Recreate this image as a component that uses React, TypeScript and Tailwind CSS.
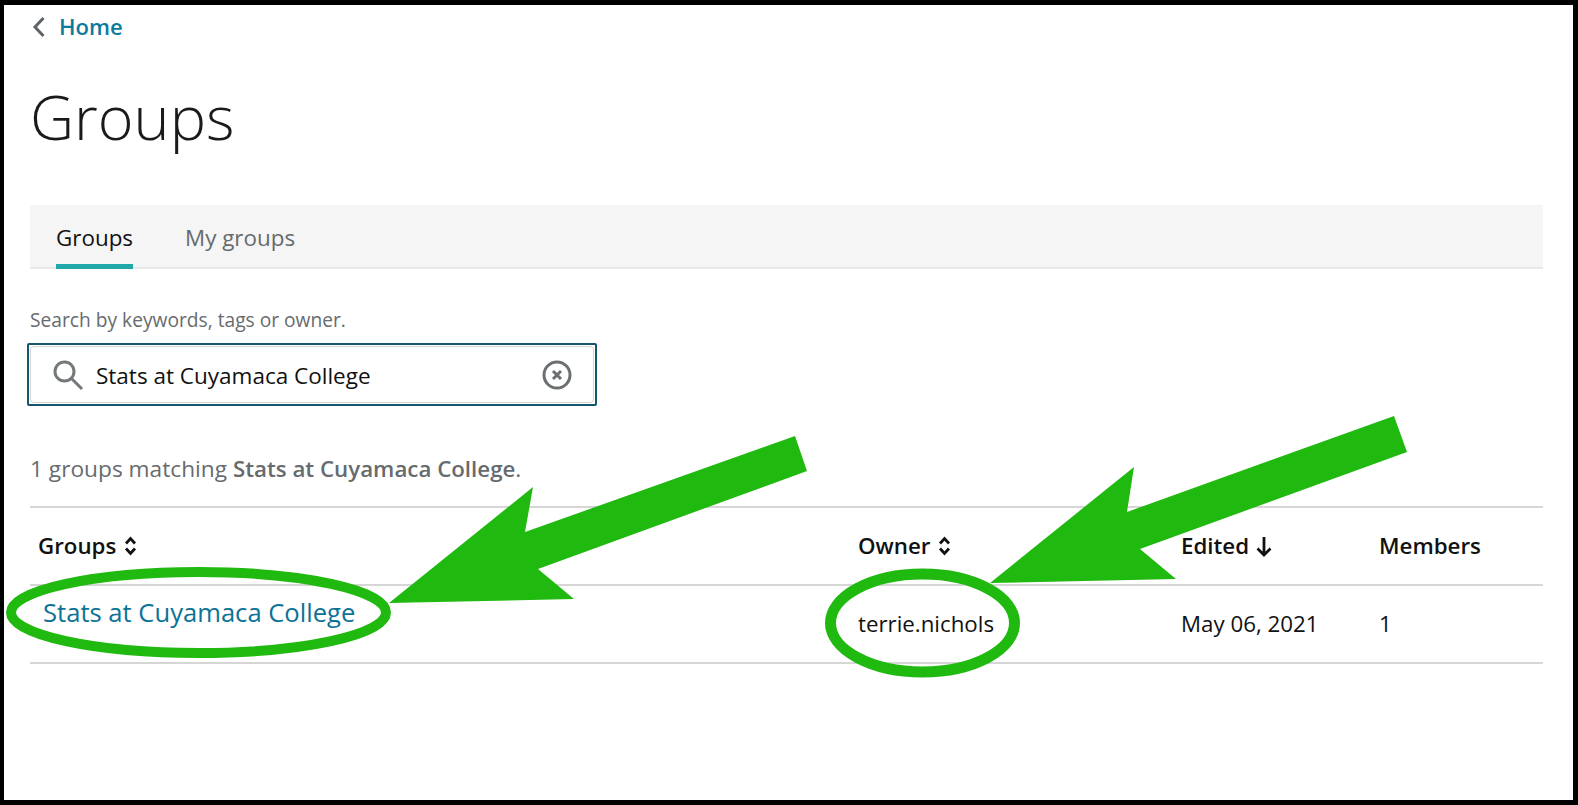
import React from "react";

function SortIcon() {
  return (
    <svg width="15" height="22" viewBox="0 0 15 22" fill="none" stroke="#111" strokeWidth="2.8" className="ml-[7px]">
      <path d="M3 8.5 L7.5 3.5 L12 8.5" />
      <path d="M3 13.5 L7.5 18.5 L12 13.5" />
    </svg>
  );
}

function Arrows() {
  return (
    <svg width="1578" height="805" viewBox="0 0 1578 805" className="pointer-events-none absolute top-0 left-0">
      <polygon points="795,436 807,471 538,569 574,599 389,603 533,487 525,532" fill="#20b90f" />
      <polygon points="1394,416 1407,452 1140,549 1176,579 990,583 1134,467 1127,512" fill="#20b90f" />
      <ellipse cx="198.5" cy="612.5" rx="187.5" ry="40.5" fill="none" stroke="#20b90f" strokeWidth="10" />
      <ellipse cx="922.5" cy="623" rx="92" ry="49" fill="none" stroke="#20b90f" strokeWidth="11" />
    </svg>
  );
}

export default function App() {
  return (
    <div className="relative h-[805px] w-[1578px] overflow-hidden border-y-[5px] border-r-[5px] border-l-[4px] border-black bg-white font-['Open_Sans',sans-serif]">
      <div className="flex h-[43px] items-center pl-[28px]">
        <svg width="14" height="22" viewBox="0 0 14 22" fill="none" stroke="#5c6468" strokeWidth="3">
          <path d="M11.5 2 L3 11 L11.5 20" />
        </svg>
        <a className="ml-[13px] text-[22px] font-semibold text-[#0c7a9c]">Home</a>
      </div>

      <h1 className="mt-[27px] pl-[26px] text-[61px] leading-[84px] font-light text-[#1a1a1a]">Groups</h1>

      <div className="mx-[26px] mt-[46px] flex h-[64px] w-[1513px] gap-[52px] border-b-2 border-[#e8e8e8] bg-[#f5f5f5] pl-[26px]">
        <div className="flex h-[64px] items-center border-b-[5px] border-[#20a8a8] pt-[6px] text-[22.4px] text-[#111]">Groups</div>
        <div className="flex h-[64px] items-center pt-[1px] text-[22.4px] text-[#666b6e]">My groups</div>
      </div>

      <p className="mt-[37px] pl-[26px] text-[19.2px] leading-[28px] text-[#666b6e]">Search by keywords, tags or owner.</p>

      <div className="mt-[9px] ml-[23px] w-[570px] rounded-[2px] border-2 border-[#15566f] p-[1px]">
        <div className="flex h-[57px] items-center rounded-[4px] border border-[#d4d4d4] pr-[21px] pl-[20px]">
          <svg width="34" height="34" viewBox="0 0 34 34" fill="none" stroke="#73787a" strokeWidth="3">
            <circle cx="13.5" cy="13.5" r="9.5" />
            <path d="M20.5 20.5 L31 31" />
          </svg>
          <span className="ml-[11px] flex-1 pt-[2px] text-[22.5px] text-[#111]">Stats at Cuyamaca College</span>
          <svg width="30" height="30" viewBox="0 0 30 30" fill="none" stroke="#6a6f71" strokeWidth="3">
            <circle cx="15" cy="15" r="13" />
            <path d="M11 11 L19 19 M19 11 L11 19" />
          </svg>
        </div>
      </div>

      <p className="mt-[48px] pl-[26px] text-[22.7px] leading-[30px] text-[#666b6e]">
        1 groups matching <strong className="text-[22.3px] font-semibold">Stats at Cuyamaca College</strong>.
      </p>

      <div className="mx-[26px] mt-[22px] w-[1513px] text-[22.3px] text-[#111]">
        <div className="grid h-[80px] grid-cols-[820px_323px_198px_1fr] items-center border-y-2 border-[#d6d6d6] pl-[8px] font-semibold">
          <div className="flex items-center">Groups<SortIcon /></div>
          <div className="flex items-center">Owner<SortIcon /></div>
          <div className="flex items-center">
            Edited
            <svg width="18" height="24" viewBox="0 0 18 24" fill="none" stroke="#111" strokeWidth="2.8" className="ml-[6px]">
              <path d="M9 3 V21 M2.5 14.5 L9 21 L15.5 14.5" />
            </svg>
          </div>
          <div>Members</div>
        </div>
        <div className="grid h-[78px] grid-cols-[820px_323px_198px_1fr] items-center border-b-2 border-[#d6d6d6] pl-[8px]">
          <a className="mb-[22px] pl-[5px] text-[25.6px] text-[#0c7396]">Stats at Cuyamaca College</a>
          <div>terrie.nichols</div>
          <div>May 06, 2021</div>
          <div>1</div>
        </div>
      </div>

      <div className="absolute top-[-5px] left-[-4px]">
        <Arrows />
      </div>
    </div>
  );
}
